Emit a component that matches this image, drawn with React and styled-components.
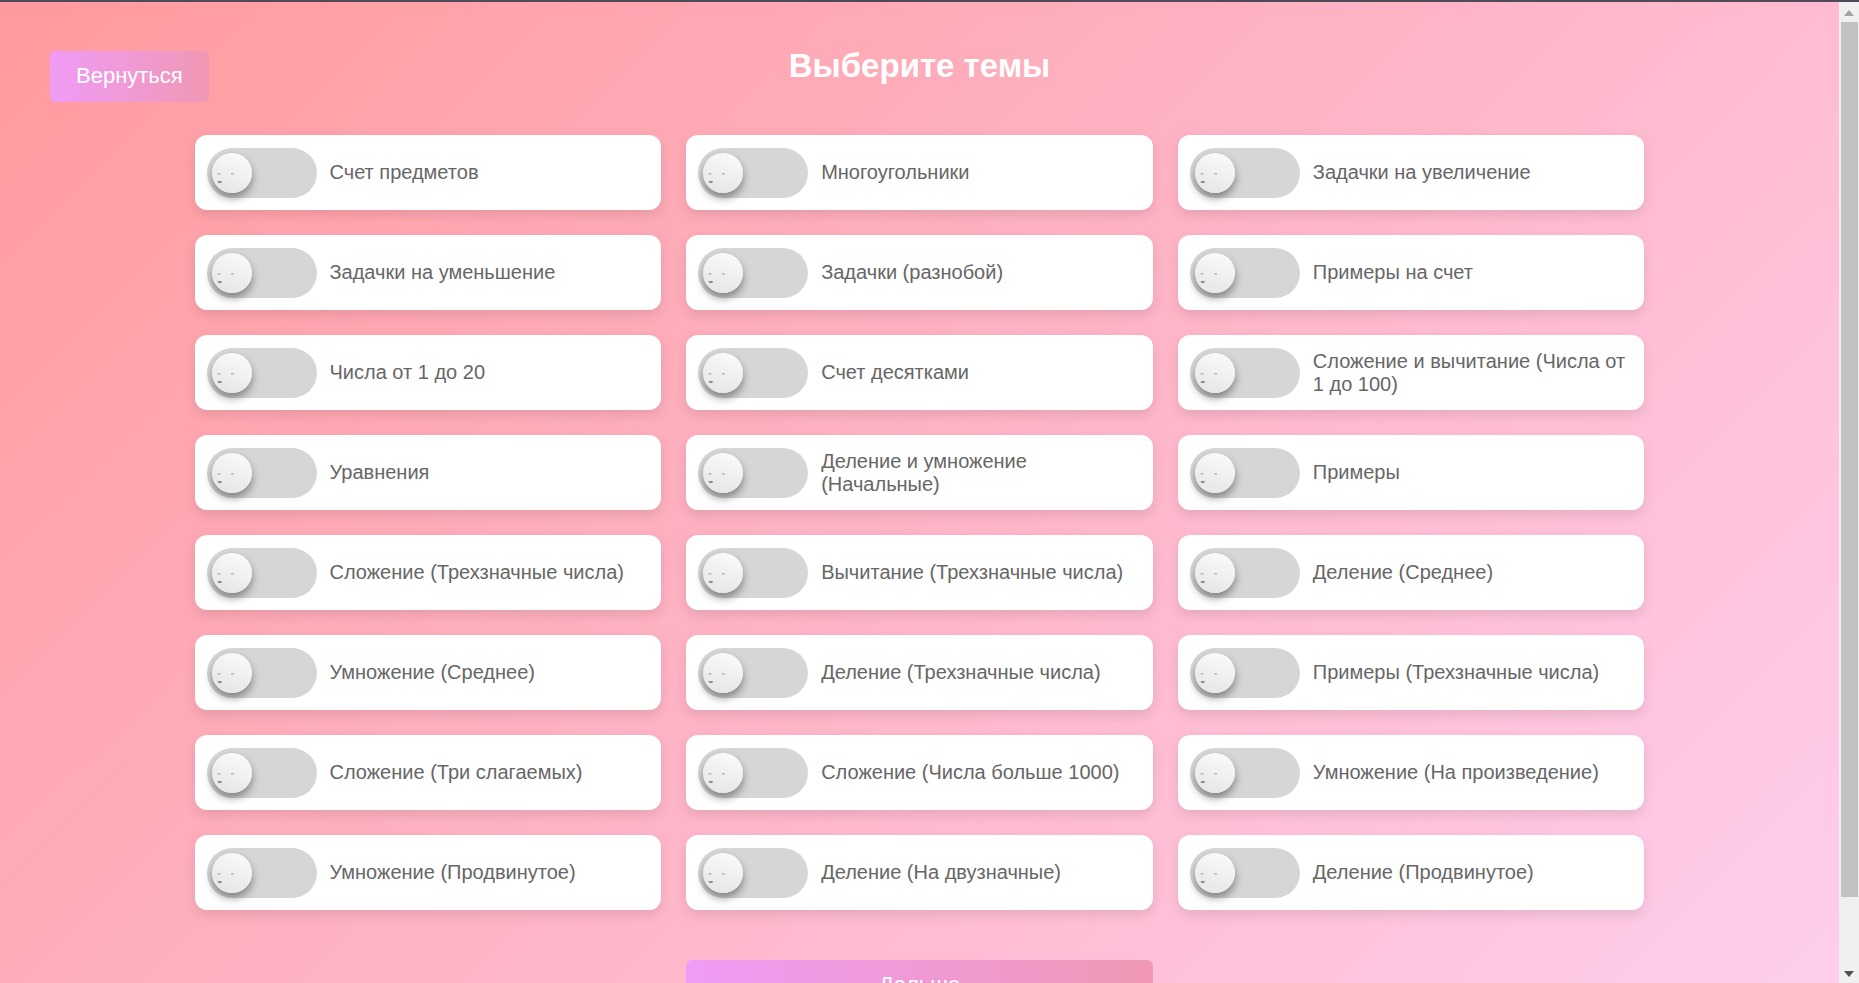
import React from "react";
import styled, { createGlobalStyle } from "styled-components";

const GlobalStyle = createGlobalStyle`
  *, *::before, *::after { box-sizing: border-box; }
  body { margin: 0; font-family: Arial, "Liberation Sans", sans-serif; }
`;

const Window = styled.div`
  display: flex;
  flex-direction: column;
  height: 100vh;
  border-top: 2px solid #4f4a58;
`;

const Viewport = styled.div`
  display: flex;
  flex: 1;
  min-height: 0;
`;

const ScrollArea = styled.div`
  flex: 1;
  min-width: 0;
  overflow-y: auto;
  scrollbar-width: none;
`;

const Page = styled.div`
  display: grid;
  grid-template-columns: 1fr minmax(0, 1450px) 1fr;
  min-height: 100%;
  padding: 44px 0 50px;
  background: linear-gradient(135deg, #ff9a9e 0%, #fecfef 100%);
`;

const Side = styled.div`
  position: relative;
`;

const GradientButton = styled.button`
  height: 51px;
  padding: 0 26px 2px;
  border: 0;
  border-radius: 6px;
  background: linear-gradient(to right, #f09bf6, #f098b4);
  color: #fff;
  font-family: inherit;
  font-size: 22px;
  line-height: 28px;
  cursor: pointer;
`;

const BackButton = styled(GradientButton)`
  position: absolute;
  top: 5px;
  left: 50px;
`;

const Content = styled.main`
  display: flex;
  flex-direction: column;
`;

const Title = styled.h1`
  margin: 0 0 49px;
  color: #fff;
  font-size: 33px;
  line-height: 40px;
  text-align: center;
`;

const TopicForm = styled.form`
  display: grid;
  grid-template-columns: repeat(3, minmax(0, 1fr));
  gap: 25px;
`;

const TopicCard = styled.label`
  display: flex;
  align-items: center;
  gap: 13px;
  min-height: 75px;
  padding: 12px;
  border-radius: 12px;
  background: #fff;
  box-shadow: 0 5px 12px rgba(0, 0, 0, 0.1);
  color: #666;
  font-size: 20px;
  line-height: 23px;
  cursor: pointer;
`;

const Switch = styled.span`
  display: flex;
  flex: none;
  align-items: center;
  width: 110px;
  height: 50px;
  padding: 0 5px;
  border-radius: 25px;
  background: #d6d6d6;

  &:has(input:checked) { background: #f09bf6; justify-content: flex-end; }
`;

const SwitchInput = styled.input`
  position: absolute;
  width: 1px;
  height: 1px;
  margin: 0;
  opacity: 0;
`;

const Knob = styled.span`
  width: 40px;
  height: 40px;
  border-radius: 50%;
  background: linear-gradient(200deg, #fcfcfc, #e4e4e4);
  box-shadow: 0 5px 8px rgba(0, 0, 0, 0.4);
`;

const Face = styled.svg`
  display: block;
`;

const NextButton = styled(GradientButton)`
  grid-column: 2;
  margin-top: 25px;
`;

const Scrollbar = styled.div`
  display: flex;
  flex: none;
  flex-direction: column;
  width: 20px;
  background: #f0f0f0;
`;

const ScrollArrow = styled.svg`
  flex: none;
  width: 20px;
  height: 20px;
`;

const ScrollTrack = styled.div`
  flex: 1;
  padding: 0 1px 0 2px;
`;

const ScrollThumb = styled.div`
  height: 93%;
  background: #c1c1c1;
`;

const topics = [
  "Счет предметов", "Многоугольники", "Задачки на увеличение",
  "Задачки на уменьшение", "Задачки (разнобой)", "Примеры на счет",
  "Числа от 1 до 20", "Счет десятками", "Сложение и вычитание (Числа от 1 до 100)",
  "Уравнения", "Деление и умножение (Начальные)", "Примеры",
  "Сложение (Трехзначные числа)", "Вычитание (Трехзначные числа)", "Деление (Среднее)",
  "Умножение (Среднее)", "Деление (Трехзначные числа)", "Примеры (Трехзначные числа)",
  "Сложение (Три слагаемых)", "Сложение (Числа больше 1000)", "Умножение (На произведение)",
  "Умножение (Продвинутое)", "Деление (На двузначные)", "Деление (Продвинутое)",
];

function Topic({ name }) {
  return (
    <TopicCard>
      <Switch>
        <SwitchInput type="checkbox" name="topic" value={name} />
        <Knob>
          <Face width="40" height="40" viewBox="0 0 40 40" aria-hidden="true">
            <rect x="5.5" y="20" width="3" height="1.4" rx=".5" fill="#b4b4b4" />
            <rect x="19" y="20" width="3" height="1.4" rx=".5" fill="#b4b4b4" />
            <path d="M5.5 28h4.6q-.4 2.2-2.3 2.2T5.5 28z" fill="#8c8c8c" />
          </Face>
        </Knob>
      </Switch>
      <span>{name}</span>
    </TopicCard>
  );
}

export default function App() {
  return (
    <Window>
      <GlobalStyle />
      <Viewport>
        <ScrollArea>
          <Page>
            <Side>
              <BackButton type="button">Вернуться</BackButton>
            </Side>
            <Content>
              <Title>Выберите темы</Title>
              <TopicForm onSubmit={(event) => event.preventDefault()}>
                {topics.map((name) => <Topic key={name} name={name} />)}
                <NextButton type="submit">Дальше</NextButton>
              </TopicForm>
            </Content>
          </Page>
        </ScrollArea>
        <Scrollbar aria-hidden="true">
          <ScrollArrow viewBox="0 0 20 20"><path d="M5 14l5-6 5 6z" fill="#a3a3a3" /></ScrollArrow>
          <ScrollTrack><ScrollThumb /></ScrollTrack>
          <ScrollArrow viewBox="0 0 20 20"><path d="M5 8l5 6 5-6z" fill="#505050" /></ScrollArrow>
        </Scrollbar>
      </Viewport>
    </Window>
  );
}
